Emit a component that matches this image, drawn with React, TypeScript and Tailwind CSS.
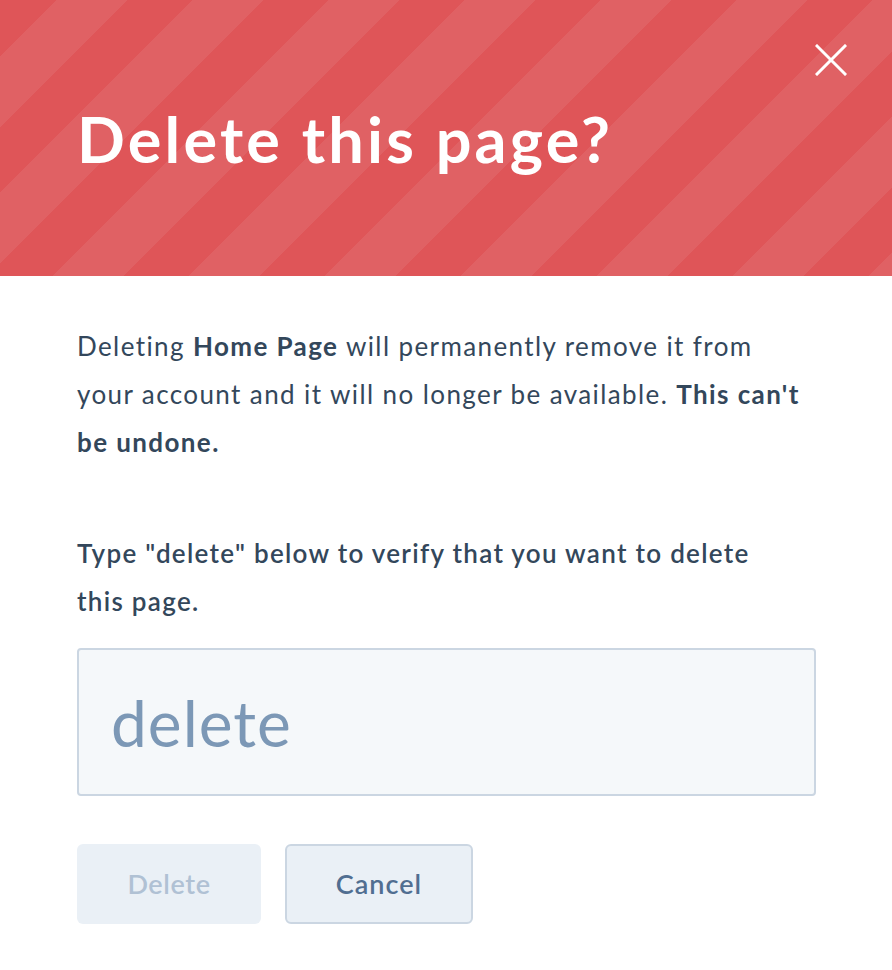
import React from 'react';

const CloseIcon = () => (
  <svg width="32" height="32" viewBox="0 0 32 32" fill="none" stroke="white" strokeWidth="3" strokeLinecap="square">
    <path d="M2 2L30 30M30 2L2 30" />
  </svg>
);

export default function App() {
  return (
    <div className="w-[892px] min-h-[970px] bg-white font-['Lato',sans-serif] text-[#33475b]">
      <header className="relative flex h-[276px] items-center bg-[#df5558] bg-[repeating-linear-gradient(135deg,#df5558_0px,#df5558_40px,#e06164_40px,#e06164_90px,#df5558_90px,#df5558_96.2px)] pl-[77px]">
        <h1 className="text-[63px] font-bold leading-none tracking-[3.2px] text-white">Delete this page?</h1>
        <button className="absolute right-[45px] top-[44px]" aria-label="Close">
          <CloseIcon />
        </button>
      </header>

      <div className="flex flex-col px-[77px] pt-[46px]">
        <p className="w-[732px] text-[26px] leading-[48px] tracking-[1.4px]">
          Deleting <strong className="font-bold">Home Page</strong> will permanently remove it from your account and it will
          no longer be available. <strong className="font-bold">This can't be undone.</strong>
        </p>

        <label className="mt-[63px] block w-[700px] text-[26px] font-semibold leading-[48px] tracking-[1.3px]">
          Type "delete" below to verify that you want to delete this page.
        </label>

        <input
          type="text"
          placeholder="delete"
          className="mt-[23px] h-[148px] w-[739px] rounded-[4px] border-2 border-[#cbd6e2] bg-[#f5f8fa] px-[32px] text-[64px] tracking-[1px] text-[#33475b] outline-none placeholder:text-[#7c98b6]"
        />

        <div className="mt-[48px] flex gap-[24px]">
          <button
            disabled
            className="h-[80px] w-[184px] rounded-[6px] bg-[#eaf0f6] text-[27px] font-semibold tracking-[0.6px] text-[#b0c1d4]"
          >
            Delete
          </button>
          <button className="h-[80px] w-[188px] rounded-[6px] border-2 border-[#cbd6e2] bg-[#eaf0f6] text-[27px] font-semibold tracking-[1px] text-[#506e91]">
            Cancel
          </button>
        </div>
      </div>
    </div>
  );
}
